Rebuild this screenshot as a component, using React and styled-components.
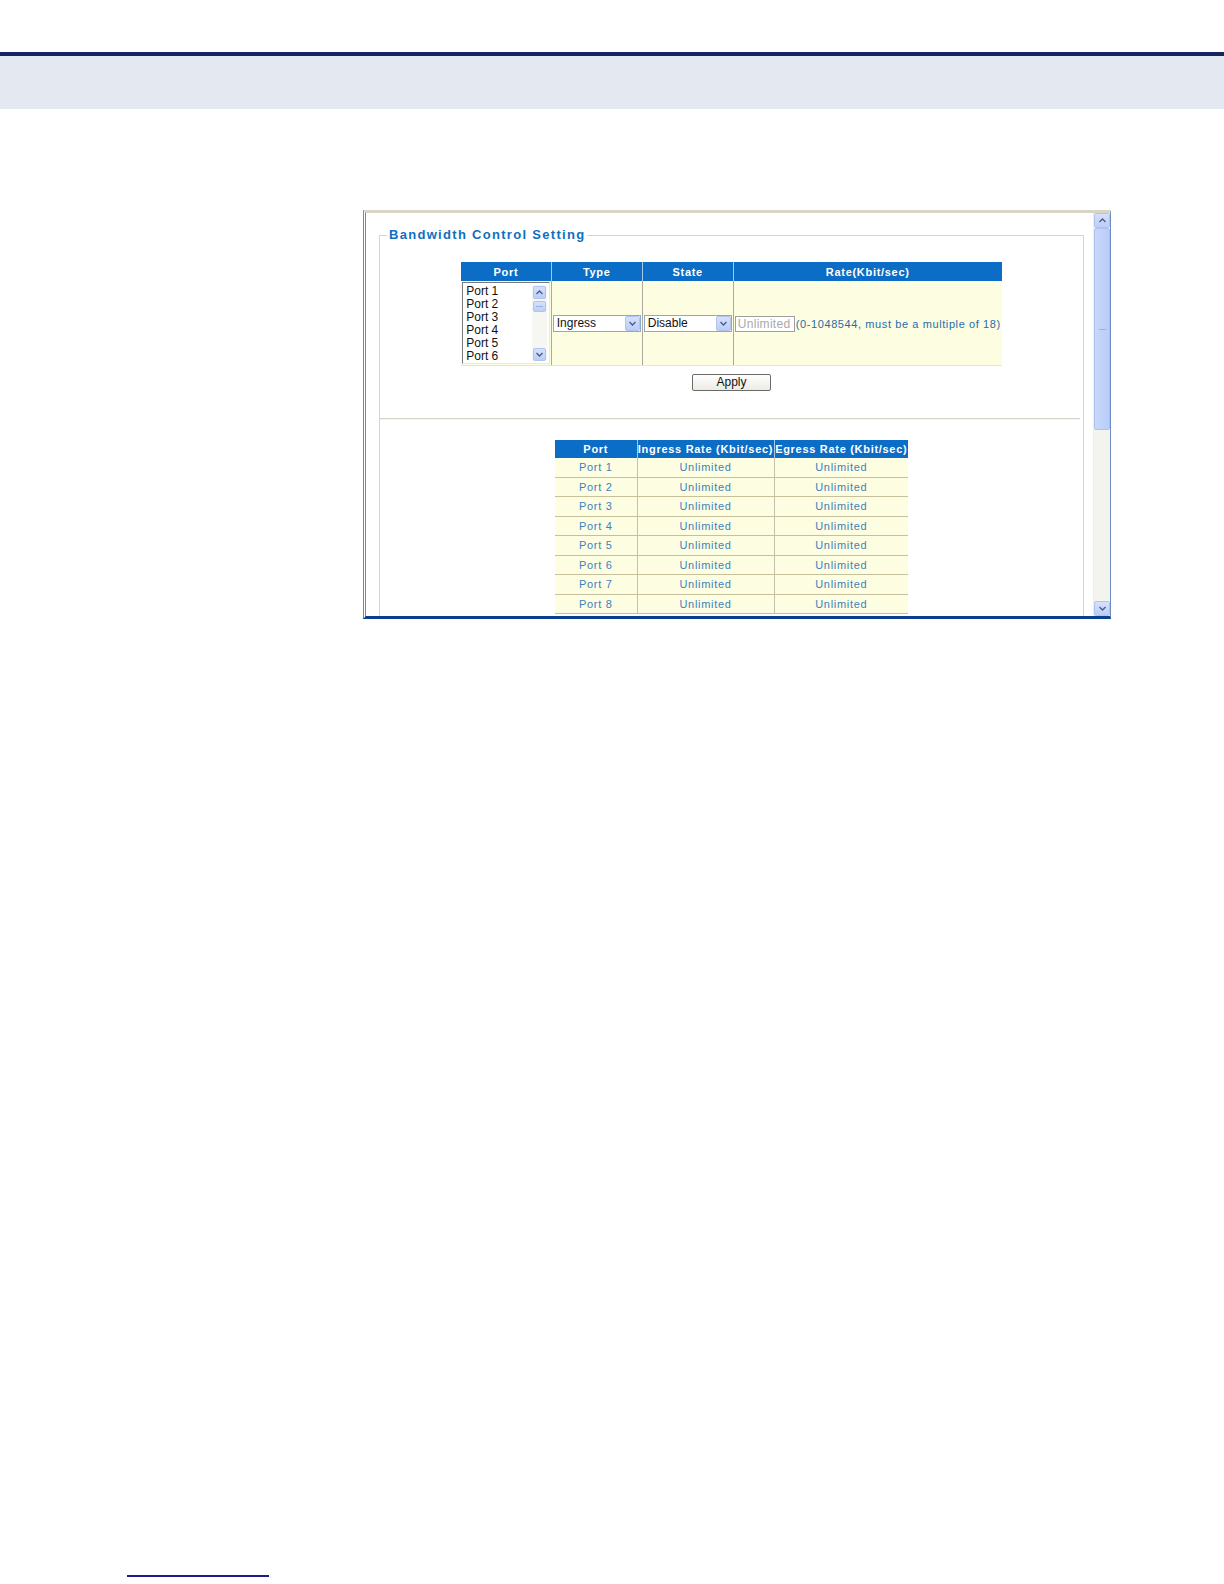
import React from "react";
import styled, { createGlobalStyle } from "styled-components";

const GlobalStyle = createGlobalStyle`
  html, body {
    margin: 0;
    background: #ffffff;
    font-family: "Liberation Sans", Arial, sans-serif;
  }
`;

const Page = styled.div`
  width: 1224px;
  height: 1584px;
  box-sizing: border-box;
  padding-top: 52px;
  overflow: hidden;
`;

const TopRule = styled.div`
  height: 4px;
  background: #14245e;
`;

const Band = styled.div`
  height: 53px;
  background: #e4e8f0;
`;

const Shot = styled.div`
  margin: 101px 0 0 363px;
  width: 748px;
  height: 409px;
  box-sizing: border-box;
  display: flex;
  border-top: 3px solid #d8d4c6;
  border-left: 3px double #858585;
  border-right: 1px solid #6f8cc0;
  border-bottom: 3px solid #0c3e8e;
  background: #ffffff;
`;

const Viewport = styled.div`
  flex: 1;
  overflow: hidden;
  padding: 14px 9px 0 13px;
`;

const Fieldset = styled.fieldset`
  margin: 0;
  padding: 0 0 40px;
  border: 1px solid #d6d6ce;
  min-height: 420px;
`;

const Legend = styled.legend`
  margin-left: 7px;
  padding: 0 2px;
  color: #0e6fc0;
  font-size: 13px;
  font-weight: bold;
  letter-spacing: 1.3px;
  line-height: 16px;
`;

const Grid = styled.table`
  border-collapse: collapse;
  margin: ${(p) => p.$top}px auto 0;
  table-layout: fixed;
`;

const Head = styled.th`
  height: ${(p) => p.$h || 19}px;
  padding: 0;
  background: #0b6dc5;
  color: #ffffff;
  font-size: 11px;
  font-weight: bold;
  letter-spacing: 0.7px;
  white-space: nowrap;
  border-left: 1px solid #a9c7e8;
  &:first-child {
    border-left: none;
  }
`;

const FormCell = styled.td`
  height: 84px;
  padding: 0 1px;
  background: #fdfde2;
  border-left: 1px solid #a9a9a0;
  border-bottom: 1px solid #e6e6d0;
  vertical-align: middle;
  white-space: nowrap;
  &:first-child {
    border-left: none;
  }
`;

const ListBox = styled.div`
  height: 82px;
  box-sizing: border-box;
  display: flex;
  background: #ffffff;
  border-top: 1px solid #7a7a7a;
  border-left: 1px solid #7a7a7a;
  border-right: 1px solid #e8e8e8;
  border-bottom: 1px solid #e8e8e8;
`;

const ListItems = styled.div`
  flex: 1;
  padding: 2px 0 0 3px;
  font-size: 12px;
  line-height: 12.9px;
  color: #111111;
`;

const ListBar = styled.div`
  width: 15px;
  margin: 2px 2px 2px 0;
  display: flex;
  flex-direction: column;
  align-items: center;
  background: #f6f6f2;
`;

const ArrowBtn = styled.div`
  width: ${(p) => p.$w || 13}px;
  height: ${(p) => p.$h || 13}px;
  box-sizing: border-box;
  flex-shrink: 0;
  display: flex;
  align-items: center;
  justify-content: center;
  background: linear-gradient(#d5e1fc, #bccdf7);
  border: 1px solid #b2c4ee;
  border-radius: 2px;
  margin-top: ${(p) => p.$mt || 0}px;
`;

const Spacer = styled.div`
  flex: 1;
`;

const Select = styled.div`
  height: 17px;
  box-sizing: border-box;
  display: flex;
  align-items: center;
  background: #ffffff;
  border: 1px solid #8fa8c8;
  font-size: 12px;
  color: #111111;
  padding-left: 3px;
  span {
    flex: 1;
  }
`;

const RateInput = styled.span`
  display: inline-block;
  width: 60px;
  height: 16px;
  box-sizing: border-box;
  vertical-align: middle;
  border: 1px solid #a0a0a0;
  font-size: 12px;
  line-height: 14px;
  color: #a9a9a9;
  padding-left: 2px;
  letter-spacing: 0.3px;
  background: #ffffff;
`;

const Hint = styled.span`
  margin-left: 1px;
  vertical-align: middle;
  font-size: 11px;
  letter-spacing: 0.6px;
  color: #1f6eaa;
`;

const ButtonRow = styled.div`
  display: flex;
  justify-content: center;
  margin-top: 8px;
`;

const Button = styled.button`
  width: 79px;
  height: 17px;
  padding: 0;
  font-family: "Liberation Sans", Arial, sans-serif;
  font-size: 12px;
  line-height: 15px;
  color: #111111;
  background: linear-gradient(#ffffff, #ecebe4);
  border: 1px solid #6a6a6a;
  border-radius: 2px;
`;

const Divider = styled.div`
  margin: 27px 3px 0 0;
  height: 1px;
  background: #d4d4cc;
  border-bottom: 1px solid #f4f4f0;
`;

const DataCell = styled.td`
  height: 18.5px;
  padding: 0;
  background: #fdfde2;
  text-align: center;
  font-size: 11px;
  letter-spacing: 0.7px;
  color: #3b82bc;
  border-bottom: 1px solid #c7c09c;
  border-left: 1px solid #c4c0ae;
  &:first-child {
    border-left: none;
  }
`;

const ScrollBar = styled.div`
  width: 16px;
  display: flex;
  flex-direction: column;
  background: #f4f4ef;
  border-left: 1px solid #eeeeea;
`;

const Thumb = styled.div`
  height: 202px;
  box-sizing: border-box;
  display: flex;
  align-items: center;
  justify-content: center;
  background: linear-gradient(90deg, #c8d8fc, #b9cdf8);
  border: 1px solid #aec2ee;
  border-radius: 2px;
`;

const Grip = styled.div`
  width: 7px;
  height: 1px;
  background: #9ab0e0;
`;

const FooterRule = styled.div`
  margin: 956px 0 0 127px;
  width: 142px;
  height: 2px;
  background: #1c1f8e;
`;

const Chevron = ({ up }) => (
  <svg width="7" height="5" viewBox="0 0 7 5">
    <path
      d={up ? "M0.5 4 L3.5 1 L6.5 4" : "M0.5 1 L3.5 4 L6.5 1"}
      fill="none"
      stroke="#4a5d8a"
      strokeWidth="1.4"
    />
  </svg>
);

const ports = [1, 2, 3, 4, 5, 6, 7, 8];

export default function App() {
  return (
    <Page>
      <GlobalStyle />
      <TopRule />
      <Band />
      <Shot>
        <Viewport>
          <Fieldset>
            <Legend>Bandwidth Control Setting</Legend>
            <Grid $top={19}>
              <colgroup>
                <col style={{ width: 90 }} />
                <col style={{ width: 91 }} />
                <col style={{ width: 91 }} />
                <col style={{ width: 266 }} />
              </colgroup>
              <thead>
                <tr>
                  <Head>Port</Head>
                  <Head>Type</Head>
                  <Head>State</Head>
                  <Head>Rate(Kbit/sec)</Head>
                </tr>
              </thead>
              <tbody>
                <tr>
                  <FormCell>
                    <ListBox>
                      <ListItems>
                        {ports.slice(0, 6).map((n) => (
                          <div key={n}>Port {n}</div>
                        ))}
                      </ListItems>
                      <ListBar>
                        <ArrowBtn $mt={1}>
                          <Chevron up />
                        </ArrowBtn>
                        <ArrowBtn $h={11} $mt={2}>
                          <Grip />
                        </ArrowBtn>
                        <Spacer />
                        <ArrowBtn>
                          <Chevron />
                        </ArrowBtn>
                      </ListBar>
                    </ListBox>
                  </FormCell>
                  <FormCell>
                    <Select>
                      <span>Ingress</span>
                      <ArrowBtn $w={15} $h={15}>
                        <Chevron />
                      </ArrowBtn>
                    </Select>
                  </FormCell>
                  <FormCell>
                    <Select>
                      <span>Disable</span>
                      <ArrowBtn $w={15} $h={15}>
                        <Chevron />
                      </ArrowBtn>
                    </Select>
                  </FormCell>
                  <FormCell>
                    <RateInput>Unlimited</RateInput>
                    <Hint>(0-1048544, must be a multiple of 18)</Hint>
                  </FormCell>
                </tr>
              </tbody>
            </Grid>
            <ButtonRow>
              <Button>Apply</Button>
            </ButtonRow>
            <Divider />
            <Grid $top={20}>
              <colgroup>
                <col style={{ width: 82 }} />
                <col style={{ width: 137 }} />
                <col style={{ width: 134 }} />
              </colgroup>
              <thead>
                <tr>
                  <Head $h={18}>Port</Head>
                  <Head $h={18}>Ingress Rate (Kbit/sec)</Head>
                  <Head $h={18}>Egress Rate (Kbit/sec)</Head>
                </tr>
              </thead>
              <tbody>
                {ports.map((n) => (
                  <tr key={n}>
                    <DataCell>Port {n}</DataCell>
                    <DataCell>Unlimited</DataCell>
                    <DataCell>Unlimited</DataCell>
                  </tr>
                ))}
              </tbody>
            </Grid>
          </Fieldset>
        </Viewport>
        <ScrollBar>
          <ArrowBtn $w={16} $h={15}>
            <Chevron up />
          </ArrowBtn>
          <Thumb>
            <Grip />
          </Thumb>
          <Spacer />
          <ArrowBtn $w={16} $h={15}>
            <Chevron />
          </ArrowBtn>
        </ScrollBar>
      </Shot>
      <FooterRule />
    </Page>
  );
}
